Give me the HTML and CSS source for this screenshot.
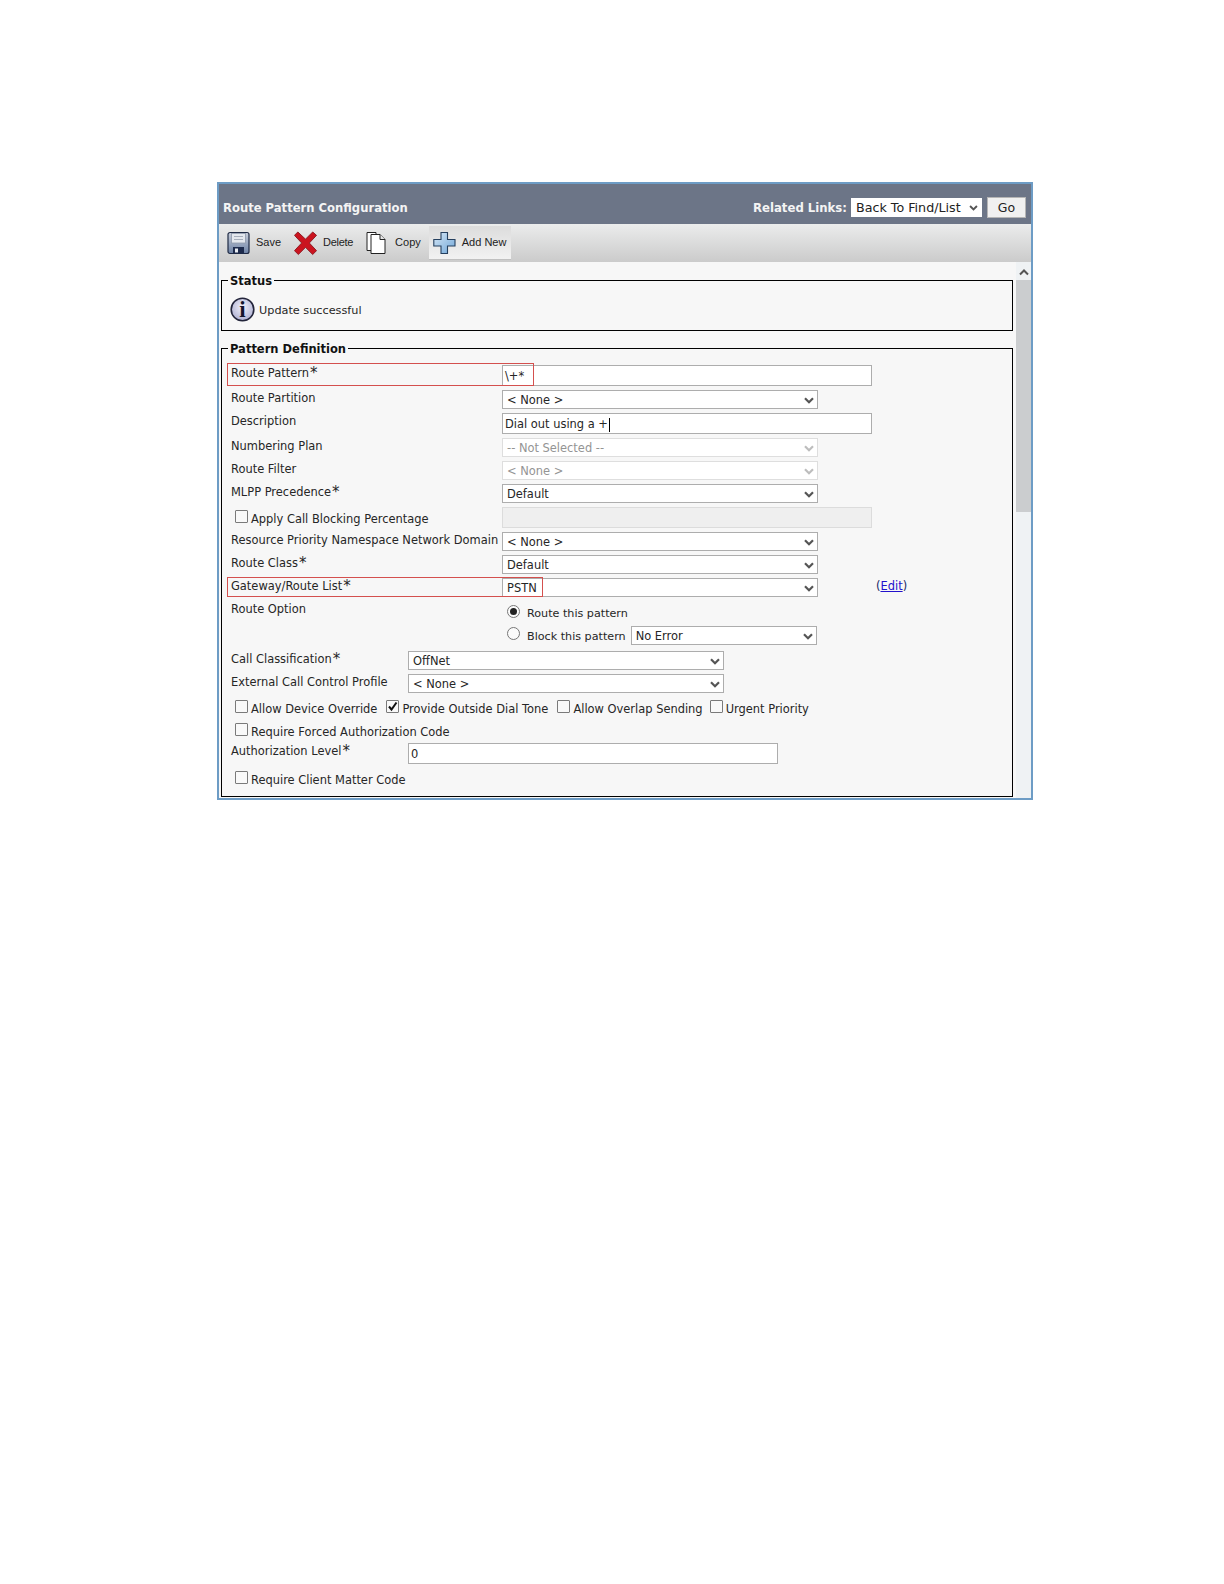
FILE: index.html
```html
<!DOCTYPE html>
<html lang="en">
<head>
<meta charset="utf-8">
<title>Route Pattern Configuration</title>
<link rel="stylesheet" href="styles.css">
</head>
<body>
<svg class="defs" width="0" height="0" aria-hidden="true">
  <defs>
    <symbol id="chev" viewBox="0 0 10 7"><path d="M1 1.200 5 5.200 9 1.200" fill="none" stroke="currentColor" stroke-width="2.200"/></symbol>
    <linearGradient id="fl" x1="0" y1="0" x2="0" y2="1"><stop offset="0" stop-color="#c9cfdb"/><stop offset="1" stop-color="#6d82a5"/></linearGradient>
    <linearGradient id="pl" x1="0" y1="0" x2="1" y2="1"><stop offset="0" stop-color="#d8e8f6"/><stop offset="1" stop-color="#6fa6d8"/></linearGradient>
    <radialGradient id="inf" cx=".5" cy=".4" r=".65"><stop offset="0" stop-color="#f2f2fa"/><stop offset="1" stop-color="#a9abd0"/></radialGradient>
  </defs>
</svg>
<main class="frame">
  <header class="head">
    <h1 class="title">Route Pattern Configuration</h1>
    <div class="links">
      <span class="links-label">Related Links:</span>
      <div class="links-select">Back To Find/List<svg class="links-chev"><use href="#chev"/></svg></div>
      <div class="go">Go</div>
    </div>
  </header>
  <nav class="toolbar">
    <div class="tool">
      <svg width="23" height="24" viewBox="0 0 23 24">
        <path d="M3 1.500h17a2 2 0 0 1 2 2v17a2 2 0 0 1-2 2H3a2 2 0 0 1-2-2v-17a2 2 0 0 1 2-2z" fill="url(#fl)" stroke="#1f2a44" stroke-width="1.200"/>
        <rect x="4.500" y="2.500" width="14" height="9.500" fill="#e4e8ee" stroke="#8d98ab" stroke-width=".8"/>
        <path d="M7 5.500h9M7 8.500h9" stroke="#a5adba" stroke-width="1"/>
        <rect x="6" y="16" width="11" height="6.500" fill="#1d2b4d"/>
        <rect x="8" y="17.500" width="3" height="4" fill="#e8ecf2"/>
      </svg>
      <span>Save</span>
    </div>
    <div class="tool tool-delete">
      <svg width="23" height="26" viewBox="0 0 24 26">
        <path d="M4 1.500 12 9 19.500 1.500 23.500 5 16 13 23.500 21 19.500 25 12 17.500 4.500 25 .5 21 8 13 .5 5z" fill="#cb141f" stroke="#8e1a22" stroke-width="1"/>
      </svg>
      <span>Delete</span>
    </div>
    <div class="tool tool-copy">
      <svg width="22" height="24" viewBox="0 0 22 24">
        <path d="M1 1.500h9v18H1z" fill="#fff" stroke="#222" stroke-width="1"/>
        <path d="M5 3.500h9l5 5v14H5z" fill="#fff" stroke="#222" stroke-width="1"/>
        <path d="M14 3.500v5h5" fill="#e8e8e8" stroke="#222" stroke-width="1"/>
      </svg>
      <span>Copy</span>
    </div>
    <div class="tool tool-hover">
      <svg width="23" height="24" viewBox="0 0 23 24">
        <path d="M8 1.500h6.500v7h7.500v6.500h-7.500v7.500H8V15H.8V8.500H8z" fill="url(#pl)" stroke="#26405f" stroke-width="1.100"/>
      </svg>
      <span>Add New</span>
    </div>
  </nav>
  <div class="body">
    <div class="panel">
      <fieldset class="box box-status">
        <legend class="legend">Status</legend>
        <div class="status">
          <svg width="25" height="25" viewBox="0 0 25 25">
            <circle cx="12.500" cy="12.500" r="11.300" fill="url(#inf)" stroke="#22243a" stroke-width="1.600"/>
            <text x="12.500" y="19.500" text-anchor="middle" class="info-i">i</text>
          </svg>
          <span class="status-text">Update successful</span>
        </div>
      </fieldset>
      <fieldset class="box box-pattern">
        <legend class="legend">Pattern Definition</legend>
        <div class="form">
          <div class="row">
            <div class="mark mark-pattern"></div>
            <div class="lbl">Route Pattern<sup class="req">*</sup></div>
            <div class="field">\+*</div>
          </div>
          <div class="row">
            <div class="lbl">Route Partition</div>
            <div class="sel">&lt; None &gt;<svg class="chev"><use href="#chev"/></svg></div>
          </div>
          <div class="row">
            <div class="lbl">Description</div>
            <div class="field">Dial out using a +<span class="caret"></span></div>
          </div>
          <div class="row">
            <div class="lbl">Numbering Plan</div>
            <div class="sel sel-off">-- Not Selected --<svg class="chev"><use href="#chev"/></svg></div>
          </div>
          <div class="row">
            <div class="lbl">Route Filter</div>
            <div class="sel sel-off">&lt; None &gt;<svg class="chev"><use href="#chev"/></svg></div>
          </div>
          <div class="row">
            <div class="lbl">MLPP Precedence<sup class="req">*</sup></div>
            <div class="sel">Default<svg class="chev"><use href="#chev"/></svg></div>
          </div>
          <div class="row">
            <div class="lbl lbl-check"><span class="cb"></span>Apply Call Blocking Percentage</div>
            <div class="field field-off"></div>
          </div>
          <div class="row">
            <div class="lbl">Resource Priority Namespace Network Domain</div>
            <div class="sel">&lt; None &gt;<svg class="chev"><use href="#chev"/></svg></div>
          </div>
          <div class="row">
            <div class="lbl">Route Class<sup class="req">*</sup></div>
            <div class="sel">Default<svg class="chev"><use href="#chev"/></svg></div>
          </div>
          <div class="row">
            <div class="mark mark-gateway"></div>
            <div class="lbl">Gateway/Route List<sup class="req">*</sup></div>
            <div class="sel">PSTN<svg class="chev"><use href="#chev"/></svg></div>
            <div class="edit">(<a class="edit-link" href="#">Edit</a>)</div>
          </div>
          <div class="row row-radio">
            <div class="lbl">Route Option</div>
            <span class="radio radio-on"></span>
            <span class="radio-text">Route this pattern</span>
          </div>
          <div class="row row-block">
            <div class="lbl"></div>
            <span class="radio"></span>
            <span class="radio-text radio-text-b">Block this pattern</span>
            <div class="sel sel-err">No Error<svg class="chev"><use href="#chev"/></svg></div>
          </div>
          <div class="row row-call">
            <div class="lbl lbl-short">Call Classification<sup class="req">*</sup></div>
            <div class="sel">OffNet<svg class="chev"><use href="#chev"/></svg></div>
          </div>
          <div class="row">
            <div class="lbl lbl-short">External Call Control Profile</div>
            <div class="sel">&lt; None &gt;<svg class="chev"><use href="#chev"/></svg></div>
          </div>
          <div class="checks">
            <span class="check"><span class="cb"></span>Allow Device Override</span>
            <span class="check"><span class="cb cb-on"><svg width="11" height="11" viewBox="0 0 11 11"><path d="M2 5.500 4.500 8.500 9.500 1.500" fill="none" stroke="#111" stroke-width="2"/></svg></span>Provide Outside Dial Tone</span>
            <span class="check check-tight"><span class="cb"></span>Allow Overlap Sending</span>
            <span class="check"><span class="cb"></span>Urgent Priority</span>
          </div>
          <div class="checks checks-forced">
            <span class="check"><span class="cb"></span>Require Forced Authorization Code</span>
          </div>
          <div class="row row-auth">
            <div class="lbl lbl-short">Authorization Level<sup class="req">*</sup></div>
            <div class="field field-text-low">0</div>
          </div>
          <div class="checks">
            <span class="check"><span class="cb"></span>Require Client Matter Code</span>
          </div>
        </div>
      </fieldset>
    </div>
    <aside class="scrollbar">
      <svg class="scroll-up" width="10" height="7" viewBox="0 0 10 7"><path d="M1 5.500 5 1.500 9 5.500" fill="none" stroke="#555" stroke-width="2"/></svg>
      <div class="scroll-thumb"></div>
    </aside>
  </div>
</main>
</body>
</html>
```

FILE: styles.css
```css
* { box-sizing: border-box; }
html, body { margin: 0; padding: 0; background: #fff; }
body {
  height: 1584px;
  overflow: hidden;
  padding: 182px 0 0 217px;
  font-family: "DejaVu Sans", Verdana, sans-serif;
  font-size: 11.450px;
  color: #262626;
}
.defs { position: absolute; }
.frame {
  width: 816px;
  height: 618px;
  border: 2px solid #6d9cc5;
  display: flex;
  flex-direction: column;
  background: #f7f7f7;
}
.head {
  height: 40px;
  flex: none;
  background: #6c7587;
  display: flex;
  align-items: center;
  justify-content: space-between;
  padding: 7px 5px 0 4px;
  color: #fff;
}
.title { margin: 0; font-size: 11.600px; font-weight: bold; color: #f4f4f4; }
.links { display: flex; align-items: center; }
.links-label { font-size: 11.700px; font-weight: bold; color: #f4f4f4; margin-right: 4px; }
.links-select {
  width: 131px;
  height: 19px;
  background: #fff;
  color: #222;
  font-size: 12.700px;
  line-height: 19px;
  padding-left: 5px;
  position: relative;
}
.links-chev { position: absolute; right: 4px; top: 7px; width: 9px; height: 6px; color: #555; }
.go {
  width: 39px;
  height: 21px;
  margin-left: 5px;
  background: #f0f0f0;
  border: 1px solid #b5b5b5;
  color: #222;
  font-size: 12.500px;
  line-height: 19px;
  text-align: center;
}
.toolbar {
  height: 38px;
  flex: none;
  display: flex;
  padding: 2px 0 0 4px;
  background: linear-gradient(#ebecec, #cbcbcb);
}
.tool {
  height: 33px;
  display: flex;
  align-items: center;
  gap: 6px;
  padding: 0 4px;
  margin-right: 5px;
  font-family: "Liberation Sans", Arial, sans-serif;
  font-size: 11px;
  color: #222;
}
.tool span { position: relative; top: -1px; }
.tool-delete span { letter-spacing: -.3px; }
.tool-copy { gap: 7px; margin-right: 4px; }
.tool-hover { background: linear-gradient(#dcdcdc, #f2f2f2); box-shadow: 0 1px 0 #c0c0c0; padding-right: 5px; }
.body { flex: 1; min-height: 0; display: flex; }
.panel { width: 797px; flex: none; padding: 11px 0 0 2px; overflow: hidden; }
.box { margin: 0; border: 1px solid #000; min-width: 0; width: 792px; display: block; }
.box-status { height: 58px; padding: 0 0 0 8px; }
.box-pattern { margin-top: 10px; height: 456px; padding: 0 0 0 9px; }
.legend {
  margin-left: -2px;
  padding: 0 2px;
  font-size: 11.500px;
  font-weight: bold;
  line-height: 14px;
  color: #111;
  position: relative;
  top: 1px;
}
.box-pattern .legend { margin-left: -3px; }
.status { display: flex; align-items: center; gap: 4px; padding-top: 10px; }
.status-text { font-size: 11.250px; position: relative; top: 1px; }
.info-i { font-family: "Liberation Serif", serif; font-size: 23px; font-weight: bold; fill: #14162b; }
.form { display: flex; flex-direction: column; gap: 4px; padding-top: 10px; }
.row { display: flex; align-items: flex-start; position: relative; }
.lbl { width: 271px; flex: none; line-height: 16px; white-space: nowrap; }
.lbl-short { width: 177px; }
.lbl-check { display: flex; align-items: flex-start; padding: 4px 0 0 4px; }
.req { font-size: 15px; line-height: 0; vertical-align: -1px; margin-left: 1px; }
.mark { position: absolute; z-index: 1; border: 1px solid #d4504e; pointer-events: none; }
.mark-pattern { left: -4px; top: -2px; width: 307px; height: 23px; }
.mark-gateway { left: -4px; top: -1px; width: 316px; height: 20px; }
.field {
  width: 370px;
  height: 21px;
  flex: none;
  background: #fff;
  border: 1px solid #adadad;
  padding: 2px 0 0 2px;
  line-height: 17px;
  display: flex;
  align-items: center;
}
.field-off { background: #efefef; border-color: #dcdcdc; }
.caret { width: 1px; height: 14px; background: #000; margin-left: 1px; }
.sel {
  width: 316px;
  height: 19px;
  flex: none;
  background: #fff;
  border: 1px solid #adadad;
  padding-left: 4px;
  line-height: 19px;
  position: relative;
}
.sel-off { color: #949494; border-color: #dedede; }
.sel-off .chev { color: #bdbdbd; }
.sel-err { width: 186px; margin-left: 5px; }
.chev { position: absolute; right: 3px; top: 6px; width: 10px; height: 7px; color: #555; }
.edit { margin-left: 58px; line-height: 16px; color: #1a2a66; }
.edit-link { color: #2211cc; text-decoration: underline; }
.row-radio { height: 21px; }
.row-block { height: 19px; }
.row-call { margin-top: 2px; }
.radio {
  width: 13px;
  height: 13px;
  flex: none;
  margin: 4px 0 0 5px;
  border: 1px solid #777;
  border-radius: 50%;
  background: #fbfbfb;
  display: flex;
  align-items: center;
  justify-content: center;
}
.radio-on::after { content: ""; width: 7px; height: 7px; border-radius: 50%; background: #222; }
.row-block .radio { margin-top: 1px; }
.radio-text { margin-left: 7px; padding-top: 5px; line-height: 16px; white-space: nowrap; font-size: 11.170px; }
.radio-text-b { padding-top: 3px; }
.checks { display: flex; padding: 4px 0 0 4px; height: 20px; }
.checks-forced { padding-top: 3px; height: 18px; }
.check { display: flex; align-items: flex-start; line-height: 16px; white-space: nowrap; margin-right: 9px; }
.check-tight { margin-right: 7px; }
.cb {
  width: 13px;
  height: 13px;
  flex: none;
  margin: -1px 3px 0 0;
  border: 1px solid #7a7a7a;
  border-radius: 1px;
  background: #f9f9f9;
  display: flex;
  align-items: center;
  justify-content: center;
}
.scrollbar { flex: 1; background: #eff2f4; display: flex; flex-direction: column; align-items: center; }
.scroll-up { margin-top: 7px; height: 7px; flex: none; }
.scroll-thumb { margin-top: 4px; width: 100%; height: 232px; background: #cbcdcf; }
```
